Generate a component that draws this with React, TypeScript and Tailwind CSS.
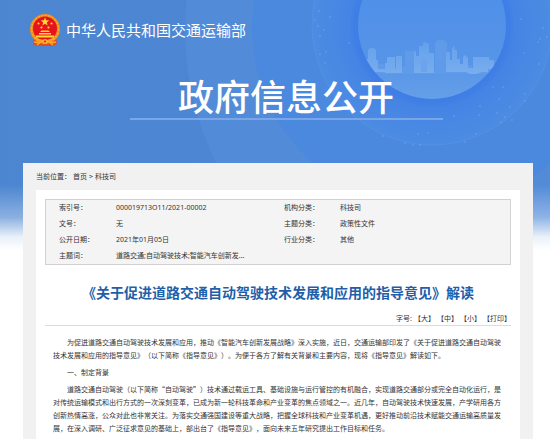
const CJK = "font-['Noto_Sans_CJK_SC',sans-serif]";
const MIXED = "font-['Noto_Sans','Noto_Sans_CJK_SC',sans-serif]";

const meta: [string, string, string?, string?][] = [
  ['索引号：', '000019713O11/2021-00002', '机构分类：', '科技司'],
  ['文号：', '无', '主题分类：', '政策性文件'],
  ['公开日期：', '2021年01月05日', '行业分类：', '其他'],
  ['主题词：', '道路交通;自动驾驶技术;智能汽车创新发...'],
];

const paragraphs = [
  '为促进道路交通自动驾驶技术发展和应用，推动《智能汽车创新发展战略》深入实施，近日，交通运输部印发了《关于促进道路交通自动驾驶技术发展和应用的指导意见》（以下简称《指导意见》）。为便于各方了解有关背景和主要内容，现将《指导意见》解读如下。',
  '一、制定背景',
  '道路交通自动驾驶（以下简称“自动驾驶”）技术通过载运工具、基础设施与运行管控的有机融合，实现道路交通部分或完全自动化运行，是对传统运输模式和出行方式的一次深刻变革，已成为新一轮科技革命和产业变革的焦点领域之一。近几年，自动驾驶技术快速发展，产学研用各方创新热情高涨，公众对此也非常关注。为落实交通强国建设等重大战略，把握全球科技和产业变革机遇，更好推动前沿技术赋能交通运输高质量发展，在深入调研、广泛征求意见的基础上，部出台了《指导意见》，面向未来五年研究提出工作目标和任务。',
];

const dots = [
  [319, 11], [315, 20], [318, 26], [324, 30], [320, 36], [326, 52], [320, 54], [325, 63], [330, 17], [349, 43],
  [521, 19], [543, 28], [524, 53], [539, 64], [538, 42], [493, 87], [503, 87], [499, 99], [525, 94], [525, 101],
  [505, 117], [501, 122], [497, 113], [480, 106], [479, 115], [454, 116], [428, 133], [418, 134], [405, 143],
  [413, 145], [420, 145], [383, 136], [465, 142], [476, 134], [540, 39], [547, 37], [510, 107], [512, 120],
];

function Backdrop() {
  return (
    <svg
      className="absolute inset-0 h-[260px] w-full"
      viewBox="0 0 550 260"
      preserveAspectRatio="xMidYMin slice"
      aria-hidden="true"
    >
      <defs>
        <linearGradient id="base" x1="0" y1="0" x2="1" y2="0">
          <stop offset="0" stopColor="#4d86d0" />
          <stop offset="1" stopColor="#4b87da" />
        </linearGradient>
        <radialGradient id="halo" gradientUnits="userSpaceOnUse" cx="432" cy="25" r="121">
          <stop offset="0.6" stopColor="#3e7de6" />
          <stop offset="0.65" stopColor="#407fe5" />
          <stop offset="0.68" stopColor="#4584e4" />
          <stop offset="1" stopColor="#4d8ce2" />
        </radialGradient>
        <linearGradient id="disc" x1="0" y1="0" x2="0" y2="1">
          <stop offset="0.4" stopColor="#5090e8" />
          <stop offset="0.78" stopColor="#5795e7" />
          <stop offset="1" stopColor="#659fe8" />
        </linearGradient>
        <linearGradient id="tower" gradientUnits="userSpaceOnUse" x1="0" y1="40" x2="0" y2="74">
          <stop offset="0" stopColor="#62a0eb" />
          <stop offset="1" stopColor="#79adee" />
        </linearGradient>
        <linearGradient id="fade" x1="0" y1="0" x2="0" y2="1">
          <stop offset="0" stopColor="#fff" stopOpacity="0" />
          <stop offset="0.5" stopColor="#fff" stopOpacity="0.35" />
          <stop offset="0.8" stopColor="#fff" stopOpacity="0.88" />
          <stop offset="1" stopColor="#fff" />
        </linearGradient>
        <clipPath id="discClip">
          <circle cx="432" cy="25" r="74" />
        </clipPath>
      </defs>
      <rect width="550" height="260" fill="url(#base)" />
      <circle cx="485" cy="30" r="300" fill="#528bd8" />
      <circle cx="432" cy="28" r="180" fill="#4b89df" />
      <circle cx="432" cy="25" r="120" fill="url(#halo)" stroke="#659be6" strokeOpacity="0.35" />
      <circle cx="432" cy="25" r="74" fill="url(#disc)" />
      <g clipPath="url(#discClip)">
        <path
          fill="#5f9be9"
          d="M358 67h12v-3h14v3h21V51h10v20h20V43l3-3h6l3 3v26h13v-4h12v6h12v-5h28v8H358z"
        />
        <path
          fill="url(#tower)"
          d="M364 72V59h4V50l2-2h4l2 2v10h2v9h7v-6h2v-6h8v12h1V56h6v17h-17v-1zM414 73V53l2-3v6h3V46h4v-3l2-1 4 2v9h5v20zM446 72V52h4v8h2V49l2-4 1 5h2v9h3v5h3v-7l2-2 3 3v10h5V57h16v3h5v9h-6v3h-6l-6 2h-6l-4-2z"
        />
        <path fill="#6ba4ec" d="M421 72V60q3-4 6 0v12z" />
      </g>
      <g fill="#8db8f2" fillOpacity="0.35">
        {dots.map(([x, y]) => (
          <circle key={`${x}-${y}`} cx={x} cy={y} r="0.9" />
        ))}
      </g>
      <rect y="185" width="550" height="65" fill="url(#fade)" />
      <rect y="250" width="550" height="10" fill="#fff" />
    </svg>
  );
}

function Emblem() {
  return (
    <svg className="h-[34px] w-[32px] shrink-0" viewBox="0 0 32 34" role="img" aria-label="国徽">
      <path d="M5 24l-1 7 4 2h16l4-2-1-7z" fill="#e9491f" />
      <circle cx="16" cy="16" r="15" fill="#ef8a1c" />
      <circle cx="16" cy="16" r="13.5" fill="none" stroke="#f7a92a" strokeWidth="1.6" strokeDasharray="2.2 1.3" />
      <circle cx="16" cy="15.5" r="12" fill="#e8141d" />
      <path d="M16 4.5l1.1 2.8 3 .2-2.3 1.9.8 3-2.6-1.7-2.6 1.7.8-3-2.3-1.9 3-.2z" fill="#ffd935" />
      <g fill="#ffd935">
        <circle cx="9.5" cy="10.5" r="1.1" />
        <circle cx="22.5" cy="10.5" r="1.1" />
        <circle cx="12.5" cy="14.5" r="1.1" />
        <circle cx="19.5" cy="14.5" r="1.1" />
        <path d="M11 19l1.5-1.5h7L21 19zM10 20h12v1.5H10zM7 22.500h18v2H7z" />
      </g>
      <path d="M6 25q10 6 20 0M8 32l5-4h6l5 4M5 29l6 1M27 29l-6 1" fill="none" stroke="#fba92a" strokeWidth="1.5" />
      <circle cx="16" cy="28.5" r="2.5" fill="#fbb02a" />
      <circle cx="16" cy="28.5" r="1" fill="#e8141d" />
    </svg>
  );
}

export default function App() {
  return (
    <div
      lang="zh-CN"
      className={`relative min-h-screen overflow-hidden bg-white text-[7px] leading-[13px] text-[#333] [text-spacing-trim:space-all] ${CJK}`}
    >
      <Backdrop />
      <div className="relative">
        <header className="flex h-[163px] flex-col text-white">
          <div className="flex items-center gap-[5px] pt-[13px] pl-[29px]">
            <Emblem />
            <p className="text-[15px] leading-[34px]">中华人民共和国交通运输部</p>
          </div>
          <div className="flex justify-center pt-[25px] pl-[22px]">
            <h1 className="w-[313px] border-b-2 border-[#79a6e8] text-center text-[36px] leading-[46px] font-medium">
              政府信息公开
            </h1>
          </div>
        </header>

        <main className="mr-[17px] ml-[23px] min-h-[276px] bg-[#f1f1f1] px-[13px]">
          <nav aria-label="当前位置" className="flex h-[27px] items-center gap-[2px]">
            <span>当前位置：</span>
            <a href="#home">首页</a>
            <span>&gt;</span>
            <a href="#dept">科技司</a>
          </nav>

          <div className="min-h-[249px] bg-white px-[9px] pt-[9px]">
            <div className="border border-[#d2d2d2] bg-[#f4f4f4]">
              <table className={`w-full table-fixed text-left leading-[16px] ${MIXED}`}>
                <colgroup>
                  <col className="w-[70px]" />
                  <col className="w-[168px]" />
                  <col className="w-[56px]" />
                  <col />
                </colgroup>
                <tbody>
                  {meta.map(([label, value, label2, value2]) => (
                    <tr key={label}>
                      <th scope="row" className="pl-[13px] font-normal">{label}</th>
                      <td>{value}</td>
                      {label2 && <th scope="row" className="font-normal">{label2}</th>}
                      {value2 && <td>{value2}</td>}
                    </tr>
                  ))}
                </tbody>
              </table>
            </div>

            <h2 className="pt-[17px] text-center text-[14px] leading-[20px] font-bold text-[#1f5fa9]">
              《关于促进道路交通自动驾驶技术发展和应用的指导意见》解读
            </h2>

            <div className="mt-[10px] flex justify-end gap-[2px] border-b border-[#dcdcdc]">
              <span>字号:</span>
              <button type="button">【大】</button>
              <button type="button">【中】</button>
              <button type="button">【小】</button>
              <button type="button">【打印】</button>
            </div>

            <article className="flex flex-col gap-1 px-2 pt-[10px]">
              {paragraphs.map((text) => (
                <p key={text} className="indent-[14px]">{text}</p>
              ))}
            </article>
          </div>
        </main>
      </div>
    </div>
  );
}
